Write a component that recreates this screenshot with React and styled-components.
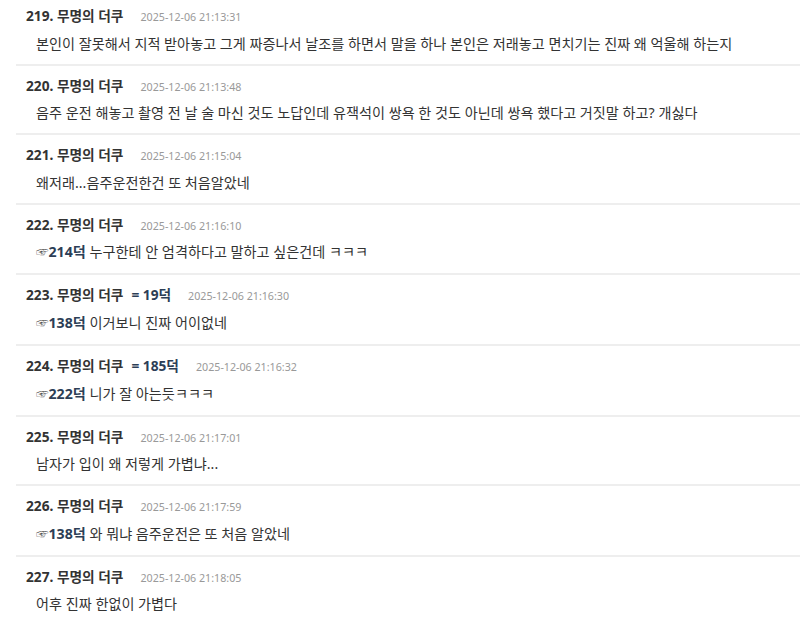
import React from 'react';
import styled, { createGlobalStyle } from 'styled-components';

const GlobalStyle = createGlobalStyle`
    body {
        margin: 0;
        background: #fff;
        font-family: "Noto Sans", "Noto Sans CJK KR", sans-serif;
    }
`;

const CommentList = styled.ul`
    list-style: none;
    margin: -4px 0 0 16px;
    padding: 0;
`;

const CommentItem = styled.li`
    padding: 11px 10px 9px;
    border-bottom: 2px solid #eee;
`;

const CommentHead = styled.div`
    display: flex;
    align-items: baseline;
    height: 18px;
    line-height: 18px;
`;

const Writer = styled.span`
    color: #333;
    font-size: 13.7px;
    font-weight: bold;
`;

const Count = styled.span`
    color: #2c3e56;
    font-size: 13.7px;
    font-weight: bold;
    margin-left: 8px;
`;

const DateText = styled.span`
    color: #999;
    font-size: 10.7px;
    margin-left: 17px;
`;

const CommentBody = styled.div`
    margin-top: 7.6px;
    padding-left: 10px;
    color: #333;
    font-size: 14.15px;
    line-height: 22px;
`;

const Reply = styled.span`
    color: #2c3e56;
    font-weight: bold;
`;

const Pointer = styled.span`
    color: #555;
    font-size: 12.5px;
    font-weight: normal;
`;

const comments = [
    { no: 219, date: '2025-12-06 21:13:31', text: '본인이 잘못해서 지적 받아놓고 그게 짜증나서 날조를 하면서 말을 하나 본인은 저래놓고 면치기는 진짜 왜 억울해 하는지' },
    { no: 220, date: '2025-12-06 21:13:48', text: '음주 운전 해놓고 촬영 전 날 술 마신 것도 노답인데 유잭석이 쌍욕 한 것도 아닌데 쌍욕 했다고 거짓말 하고? 개싫다' },
    { no: 221, date: '2025-12-06 21:15:04', text: '왜저래...음주운전한건 또 처음알았네' },
    { no: 222, date: '2025-12-06 21:16:10', reply: 214, text: '누구한테 안 엄격하다고 말하고 싶은건데 ㅋㅋㅋ' },
    { no: 223, date: '2025-12-06 21:16:30', count: 19, reply: 138, text: '이거보니 진짜 어이없네' },
    { no: 224, date: '2025-12-06 21:16:32', count: 185, reply: 222, text: '니가 잘 아는듯ㅋㅋㅋ' },
    { no: 225, date: '2025-12-06 21:17:01', text: '남자가 입이 왜 저렇게 가볍냐...' },
    { no: 226, date: '2025-12-06 21:17:59', reply: 138, text: '와 뭐냐 음주운전은 또 처음 알았네' },
    { no: 227, date: '2025-12-06 21:18:05', text: '어후 진짜 한없이 가볍다' },
];

function App() {
    return (
        <>
            <GlobalStyle />
            <CommentList>
                {comments.map((c) => (
                    <CommentItem key={c.no}>
                        <CommentHead>
                            <Writer>{c.no}. 무명의 더쿠</Writer>
                            {c.count && <Count>= {c.count}덕</Count>}
                            <DateText>{c.date}</DateText>
                        </CommentHead>
                        <CommentBody>
                            {c.reply && (
                                <Reply><Pointer>☞</Pointer>{c.reply}덕 </Reply>
                            )}
                            {c.text}
                        </CommentBody>
                    </CommentItem>
                ))}
            </CommentList>
        </>
    );
}

export default App;
